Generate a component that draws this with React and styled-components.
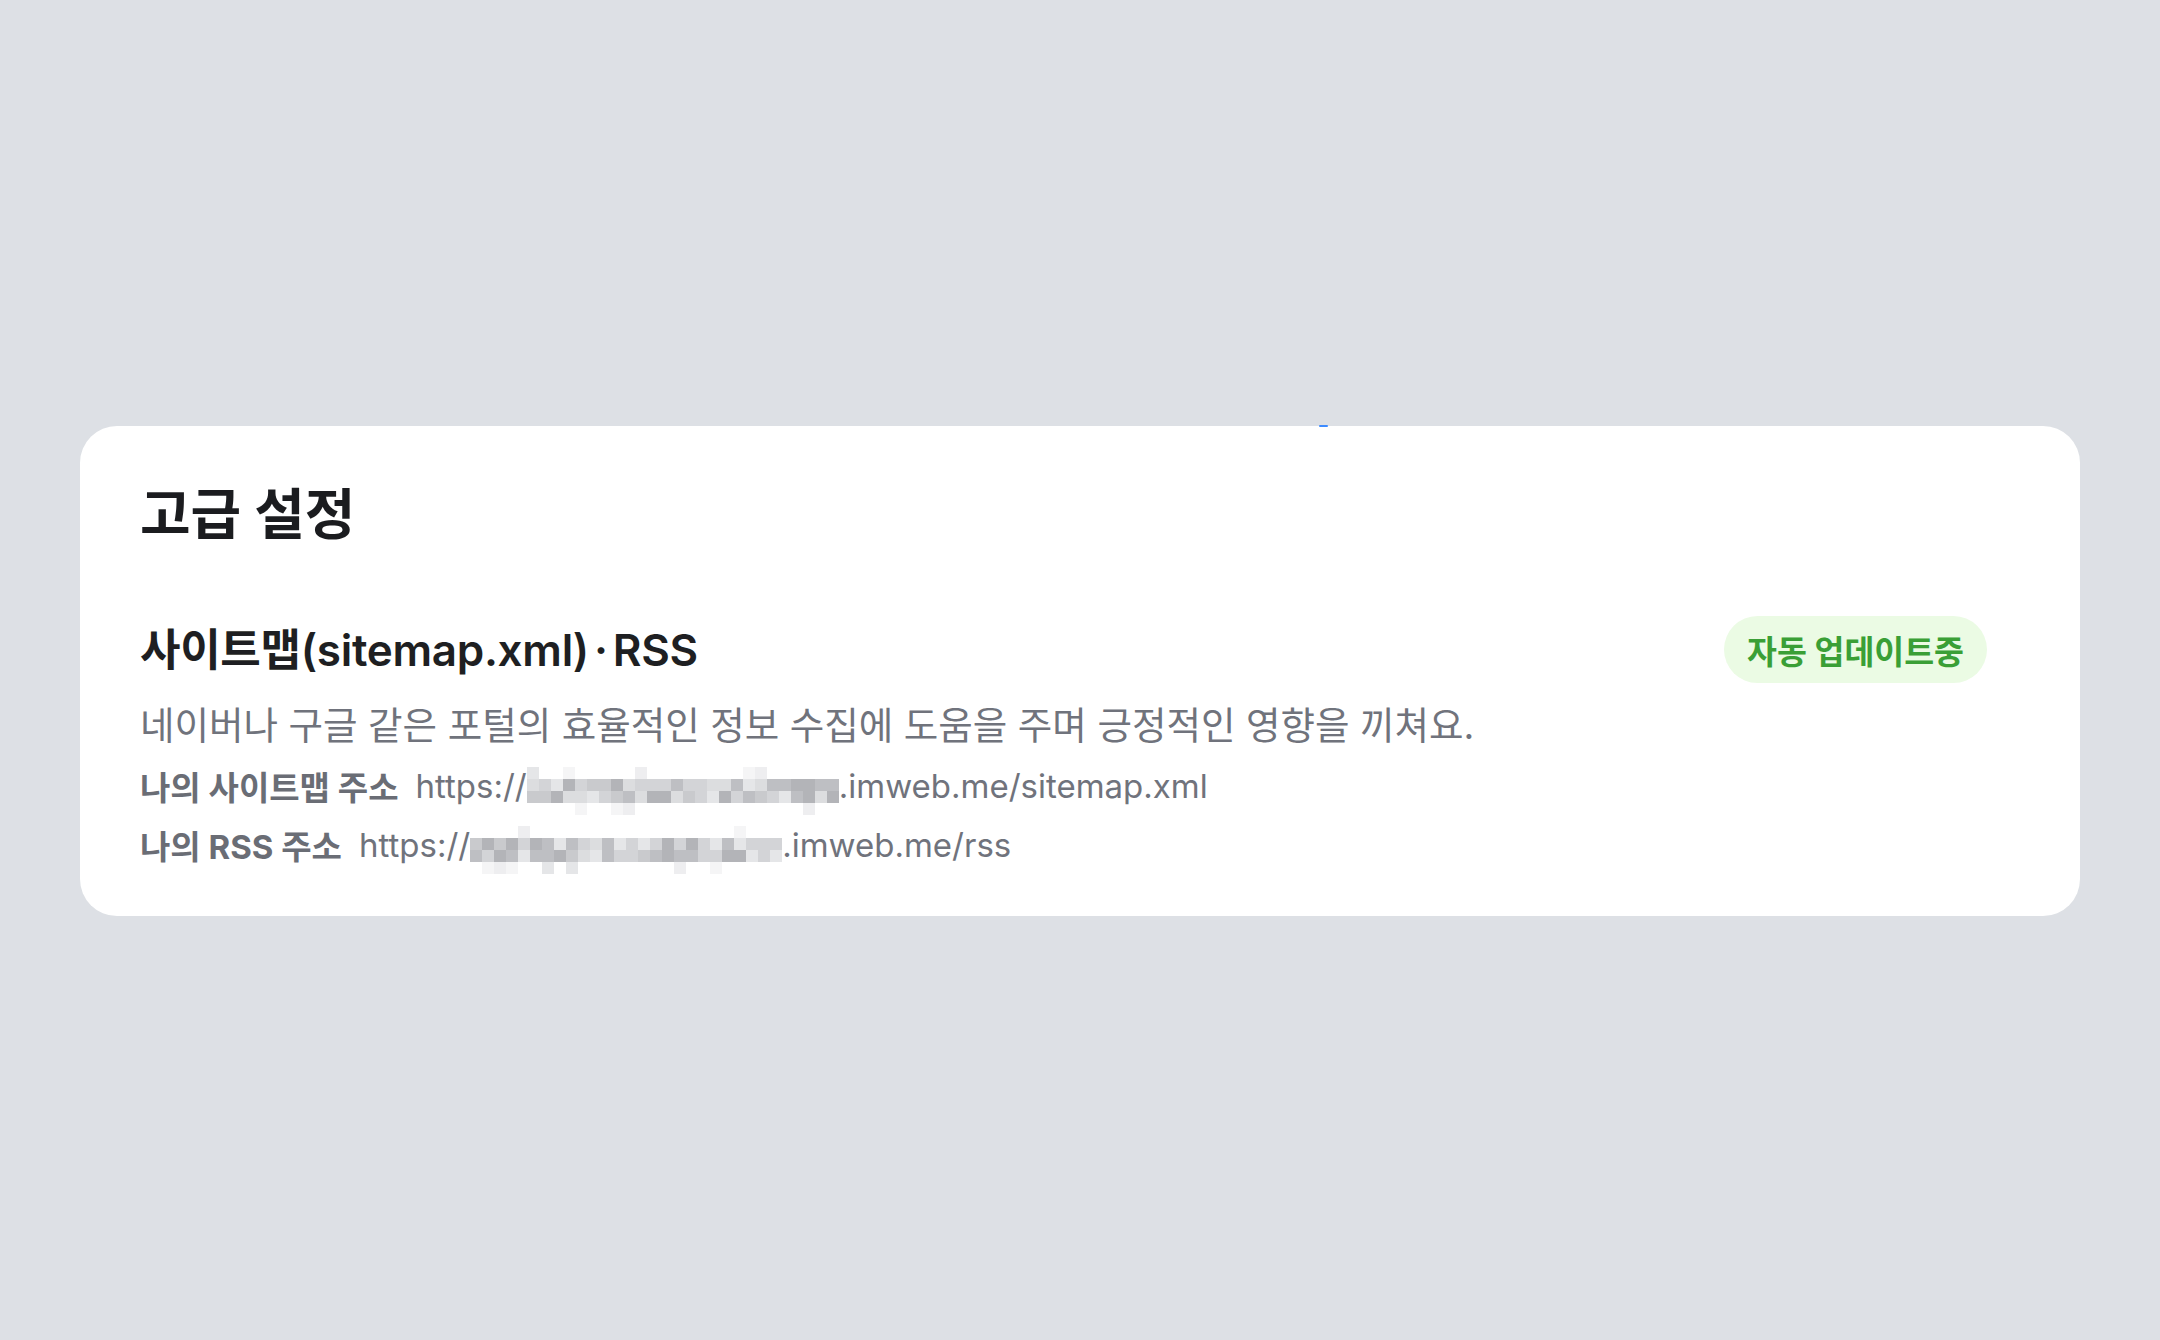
import styled, { createGlobalStyle } from "styled-components";

const GlobalStyle = createGlobalStyle`
  * {
    box-sizing: border-box;
  }
  body {
    margin: 0;
    background-color: #dde0e5;
    font-family: "Inter", "Noto Sans CJK KR", sans-serif;
  }
`;

const Page = styled.div`
  min-height: 1340px;
  padding: 426px 80px 0;
`;

const Card = styled.section`
  position: relative;
  background-color: #fff;
  border-radius: 37px;
  padding: 53px 93px 42px 60px;
`;

const FocusMark = styled.span`
  position: absolute;
  top: -1px;
  left: 1239px;
  width: 9px;
  height: 2px;
  background-color: #3d8bff;
  border-radius: 1px;
`;

const Title = styled.h1`
  margin: 0;
  font-size: 55px;
  line-height: 70px;
  font-weight: 700;
  color: #1b1c1f;
`;

const HeaderRow = styled.div`
  display: flex;
  align-items: center;
  justify-content: space-between;
  margin-top: 67px;
`;

const SubTitle = styled.h2`
  margin: 0;
  font-size: 44px;
  line-height: 52px;
  font-weight: 600;
  letter-spacing: -0.3px;
  color: #1e1f22;
`;

const Dot = styled.span`
  margin: 0 5px;
`;

const Badge = styled.span`
  display: inline-flex;
  align-items: center;
  height: 67px;
  padding: 0 23px;
  border-radius: 34px;
  background-color: #ebfbe4;
  color: #3a9f36;
  font-size: 32.5px;
  font-weight: 700;
`;

const Description = styled.p`
  margin: 16px 0 3px;
  font-size: 37.5px;
  line-height: 54px;
  color: #70737c;
`;

const AddressRow = styled.div`
  display: flex;
  align-items: center;
  height: 59px;
  font-size: 33px;
  color: #70737c;
  white-space: nowrap;
`;

const Label = styled.span`
  font-weight: 700;
  color: #6a6d75;
  margin-right: 17px;
`;

const MosaicSvg = styled.svg`
  display: block;
  flex: none;
  margin-top: 10px;
`;

const grays = ["#f5f5f6", "#eeeef0", "#e5e6e8", "#dcdddf", "#d3d4d7", "#c9cacd", "#bebfc3", "#b3b4b8"];

function makeCells(seed, cols) {
  let s = seed;
  const rand = () => {
    s = (s * 9301 + 49297) % 233280;
    return s / 233280;
  };
  const cells = [];
  for (let r = 0; r < 4; r++) {
    for (let c = 0; c < cols; c++) {
      const v = rand();
      let idx;
      if (r === 0 || r === 3) {
        if (v > 0.8) idx = Math.floor(rand() * 3);
        else continue;
      } else {
        idx = 2 + Math.floor(v * 6);
      }
      cells.push({ x: c * 12, y: r * 12, fill: grays[idx] });
    }
  }
  return cells;
}

function Mosaic({ seed, width }) {
  const cols = Math.ceil(width / 12);
  const cells = makeCells(seed, cols);
  return (
    <MosaicSvg width={width} height={48} viewBox={`0 0 ${width} 48`}>
      {cells.map((cell, i) => (
        <rect key={i} x={cell.x} y={cell.y} width={12} height={12} fill={cell.fill} />
      ))}
    </MosaicSvg>
  );
}

function Address({ label, seed, width, suffix }) {
  return (
    <AddressRow>
      <Label>{label}</Label>
      <span>https://</span>
      <Mosaic seed={seed} width={width} />
      <span>{suffix}</span>
    </AddressRow>
  );
}

function App() {
  return (
    <>
      <GlobalStyle />
      <Page>
        <Card>
          <FocusMark />
          <Title>고급 설정</Title>
          <HeaderRow>
            <SubTitle>
              사이트맵(sitemap.xml)<Dot>·</Dot>RSS
            </SubTitle>
            <Badge>자동 업데이트중</Badge>
          </HeaderRow>
          <Description>
            네이버나 구글 같은 포털의 효율적인 정보 수집에 도움을 주며 긍정적인 영향을 끼쳐요.
          </Description>
          <Address label="나의 사이트맵 주소" seed={17} width={312} suffix=".imweb.me/sitemap.xml" />
          <Address label="나의 RSS 주소" seed={53} width={312} suffix=".imweb.me/rss" />
        </Card>
      </Page>
    </>
  );
}

export default App;
